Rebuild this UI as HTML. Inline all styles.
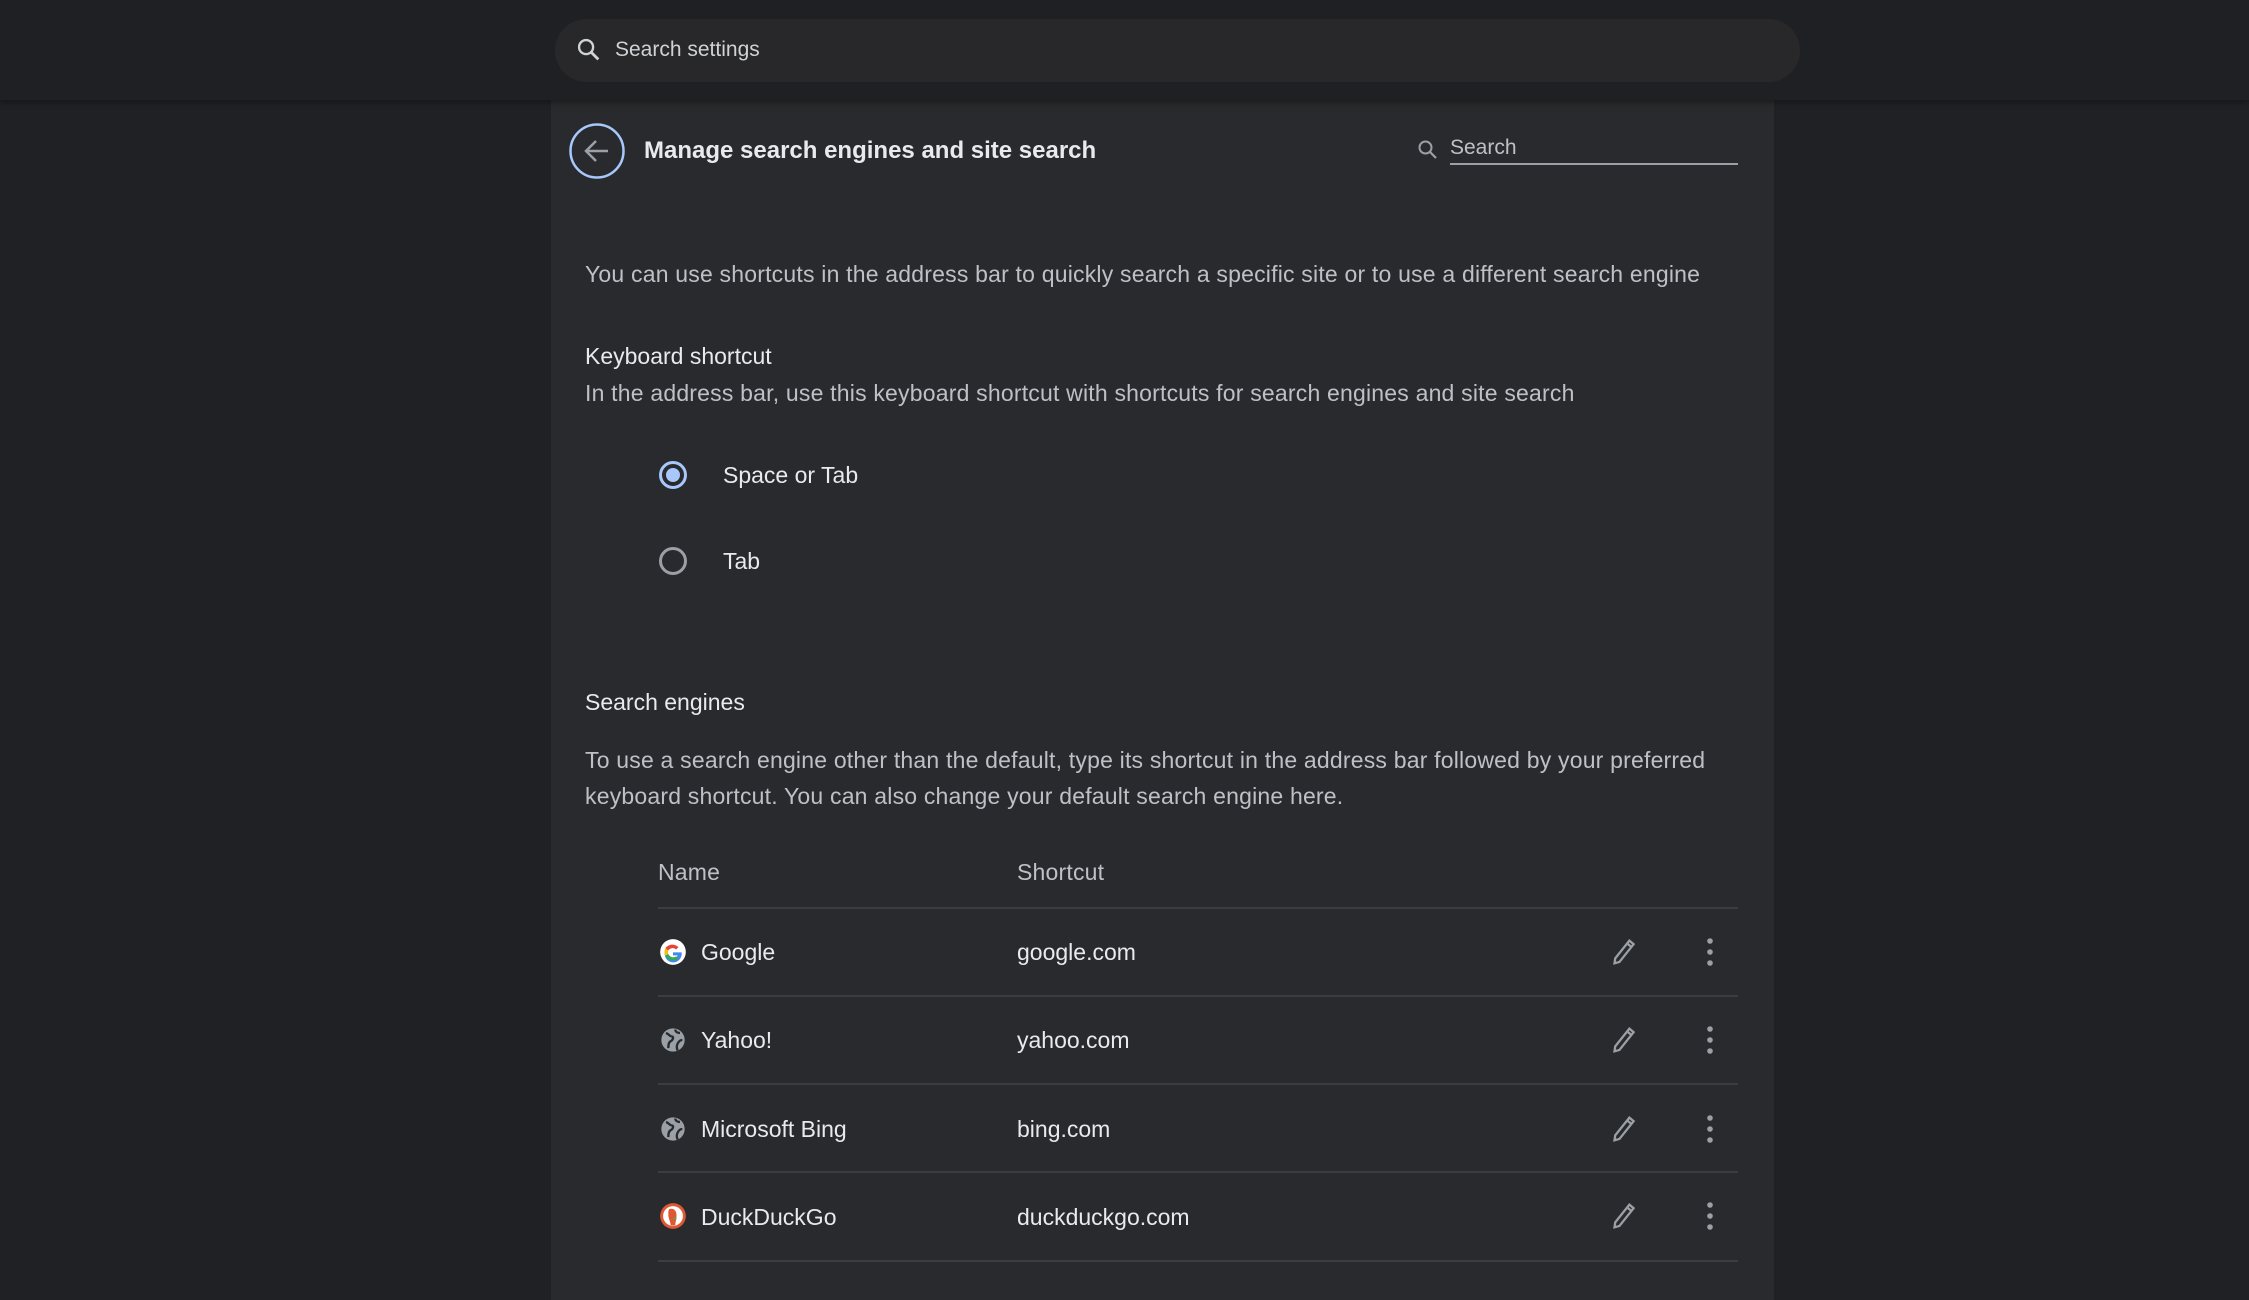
<!DOCTYPE html>
<html><head><meta charset="utf-8">
<style>
*{margin:0;padding:0;box-sizing:border-box}
body{width:2249px;height:1265px;background:#202124;font-family:"Liberation Sans",sans-serif;color:#e8eaed;position:relative;overflow:hidden}
.top{position:absolute;left:0;top:0;width:2249px;height:100px;background:#1f2023;box-shadow:0 2px 6px rgba(0,0,0,.4);z-index:2}
.sbox{position:absolute;left:555px;top:19px;width:1245px;height:63px;border-radius:32px;background:#28282a}
.sbox span{position:absolute;left:60px;top:19px;font-size:21px;color:#cfd2d6}
.card{position:absolute;left:551px;top:100px;width:1223px;height:1200px;background:#292a2d}
.a{position:absolute;white-space:nowrap}
.t{font-size:23px;letter-spacing:0.2px;color:#bdc1c6}
.h{font-size:22px;color:#e8eaed;font-weight:bold}
.sep{position:absolute;left:658px;width:1080px;height:2px;background:#3c3d40}
.row{font-size:23px;color:#e8eaed}
</style></head><body>
<div class="top"><div class="sbox">
<svg style="position:absolute;left:20px;top:17px" width="28" height="28" viewBox="0 0 24 24"><circle cx="9.5" cy="9.5" r="6" fill="none" stroke="#cfd2d6" stroke-width="2"/><path d="M14 14l6 6" stroke="#cfd2d6" stroke-width="2.4"/></svg>
<span>Search settings</span></div></div>
<div class="card"></div>
<svg class="a" style="left:568px;top:122px" width="58" height="58" viewBox="0 0 58 58"><circle cx="29" cy="29" r="26.5" fill="none" stroke="#a8c7fa" stroke-width="2.5"/><path d="M40 29H19M28 19l-10 10 10 10" fill="none" stroke="#9aa0a6" stroke-width="2.5"/></svg>
<div class="a" style="left:644px;top:137px;font-size:24px;font-weight:bold;color:#e8eaed">Manage search engines and site search</div>
<svg class="a" style="left:1416px;top:138px" width="24" height="24" viewBox="0 0 24 24"><circle cx="9.5" cy="9.5" r="6" fill="none" stroke="#9aa0a6" stroke-width="2"/><path d="M14 14l6 6" stroke="#9aa0a6" stroke-width="2.2"/></svg>
<div class="a" style="left:1450px;top:136px;font-size:21px;color:#bdc1c6">Search</div>
<div class="a" style="left:1450px;top:163px;width:288px;height:2px;background:#9aa0a6"></div>
<div class="a t" style="left:585px;top:261px">You can use shortcuts in the address bar to quickly search a specific site or to use a different search engine</div>
<div class="a h" style="left:585px;top:343px;font-weight:normal;color:#e8eaed;font-size:23px">Keyboard shortcut</div>
<div class="a t" style="left:585px;top:380px">In the address bar, use this keyboard shortcut with shortcuts for search engines and site search</div>
<svg class="a" style="left:657px;top:459px" width="32" height="32"><circle cx="16" cy="16" r="12.5" fill="none" stroke="#a8c7fa" stroke-width="3"/><circle cx="16" cy="16" r="7" fill="#a8c7fa"/></svg>
<div class="a row" style="left:723px;top:462px">Space or Tab</div>
<svg class="a" style="left:657px;top:545px" width="32" height="32"><circle cx="16" cy="16" r="12.5" fill="none" stroke="#9aa0a6" stroke-width="3"/></svg>
<div class="a row" style="left:723px;top:548px">Tab</div>
<div class="a h" style="left:585px;top:689px;font-weight:normal;font-size:23px">Search engines</div>
<div class="a t" style="left:585px;top:747px">To use a search engine other than the default, type its shortcut in the address bar followed by your preferred</div>
<div class="a t" style="left:585px;top:783px">keyboard shortcut. You can also change your default search engine here.</div>
<div class="a t" style="left:658px;top:859px">Name</div>
<div class="a t" style="left:1017px;top:859px">Shortcut</div>
<div class="sep" style="top:907px"></div>
<div class="sep" style="top:995px"></div>
<div class="sep" style="top:1083px"></div>
<div class="sep" style="top:1171px"></div>
<div class="sep" style="top:1260px"></div>

<svg class="a" style="left:659px;top:938px" width="28" height="28" viewBox="0 0 24 24"><circle cx="12" cy="12" r="11" fill="#fff"/><path d="M19 12.3h-7v2.6h4a4.6 4.6 0 1 1-1.3-5.2l1.9-1.9A7.3 7.3 0 1 0 19.3 12z" fill="#4285f4"/><path d="M5.5 8.7A7.3 7.3 0 0 1 16.6 7.8l-1.9 1.9A4.6 4.6 0 0 0 7.9 10.6z" fill="#ea4335"/><path d="M5.5 15.3l2.4-1.8a4.6 4.6 0 0 0 6.8 2.3l2 1.7A7.3 7.3 0 0 1 5.5 15.3z" fill="#34a853"/><path d="M5.5 8.7l2.4 1.9a4.6 4.6 0 0 0 0 2.9l-2.4 1.8a7.3 7.3 0 0 1 0-6.6z" fill="#fbbc05"/></svg>
<div class="a row" style="left:701px;top:939px">Google</div>
<div class="a row" style="left:1017px;top:939px">google.com</div>

<svg class="a" style="left:659px;top:1026px" width="28" height="28" viewBox="0 0 24 24"><circle cx="12" cy="12" r="10" fill="#9aa0a6"/><path d="M6 6c3 1 3 3 5 3s1 3-1 4-2 4-2 6M14 3c0 2 2 3 4 3M20 12c-2 0-3 1-4 3s-1 4 0 6" fill="none" stroke="#292a2d" stroke-width="2"/></svg>
<div class="a row" style="left:701px;top:1027px">Yahoo!</div>
<div class="a row" style="left:1017px;top:1027px">yahoo.com</div>

<svg class="a" style="left:659px;top:1115px" width="28" height="28" viewBox="0 0 24 24"><circle cx="12" cy="12" r="10" fill="#9aa0a6"/><path d="M6 6c3 1 3 3 5 3s1 3-1 4-2 4-2 6M14 3c0 2 2 3 4 3M20 12c-2 0-3 1-4 3s-1 4 0 6" fill="none" stroke="#292a2d" stroke-width="2"/></svg>
<div class="a row" style="left:701px;top:1116px">Microsoft Bing</div>
<div class="a row" style="left:1017px;top:1116px">bing.com</div>

<svg class="a" style="left:659px;top:1202px" width="28" height="28" viewBox="0 0 24 24"><circle cx="12" cy="12" r="11" fill="#de5833"/><circle cx="12" cy="12" r="8.5" fill="#fff"/><path d="M9 6c3-1 6 1 6 5s-1 6-1 9h-4c0-3-2-6-2-9s0-4 1-5z" fill="#de5833"/><path d="M11 14l4-1v2z" fill="#4caf50"/></svg>
<div class="a row" style="left:701px;top:1204px">DuckDuckGo</div>
<div class="a row" style="left:1017px;top:1204px">duckduckgo.com</div>

<svg class="a" style="left:1606px;top:935px" width="34" height="34" viewBox="0 0 24 24"><path d="M6 20l0.5-3.5L16.5 4l3 2.5L9.5 19z M15 6l3 2.5" fill="none" stroke="#9aa0a6" stroke-width="1.6"/></svg>
<svg class="a" style="left:1606px;top:1023px" width="34" height="34" viewBox="0 0 24 24"><path d="M6 20l0.5-3.5L16.5 4l3 2.5L9.5 19z M15 6l3 2.5" fill="none" stroke="#9aa0a6" stroke-width="1.6"/></svg>
<svg class="a" style="left:1606px;top:1112px" width="34" height="34" viewBox="0 0 24 24"><path d="M6 20l0.5-3.5L16.5 4l3 2.5L9.5 19z M15 6l3 2.5" fill="none" stroke="#9aa0a6" stroke-width="1.6"/></svg>
<svg class="a" style="left:1606px;top:1199px" width="34" height="34" viewBox="0 0 24 24"><path d="M6 20l0.5-3.5L16.5 4l3 2.5L9.5 19z M15 6l3 2.5" fill="none" stroke="#9aa0a6" stroke-width="1.6"/></svg>
<svg class="a" style="left:1700px;top:936px" width="20" height="32"><circle cx="10" cy="5" r="2.8" fill="#9aa0a6"/><circle cx="10" cy="16" r="2.8" fill="#9aa0a6"/><circle cx="10" cy="27" r="2.8" fill="#9aa0a6"/></svg>
<svg class="a" style="left:1700px;top:1024px" width="20" height="32"><circle cx="10" cy="5" r="2.8" fill="#9aa0a6"/><circle cx="10" cy="16" r="2.8" fill="#9aa0a6"/><circle cx="10" cy="27" r="2.8" fill="#9aa0a6"/></svg>
<svg class="a" style="left:1700px;top:1113px" width="20" height="32"><circle cx="10" cy="5" r="2.8" fill="#9aa0a6"/><circle cx="10" cy="16" r="2.8" fill="#9aa0a6"/><circle cx="10" cy="27" r="2.8" fill="#9aa0a6"/></svg>
<svg class="a" style="left:1700px;top:1200px" width="20" height="32"><circle cx="10" cy="5" r="2.8" fill="#9aa0a6"/><circle cx="10" cy="16" r="2.8" fill="#9aa0a6"/><circle cx="10" cy="27" r="2.8" fill="#9aa0a6"/></svg>
</body></html>
